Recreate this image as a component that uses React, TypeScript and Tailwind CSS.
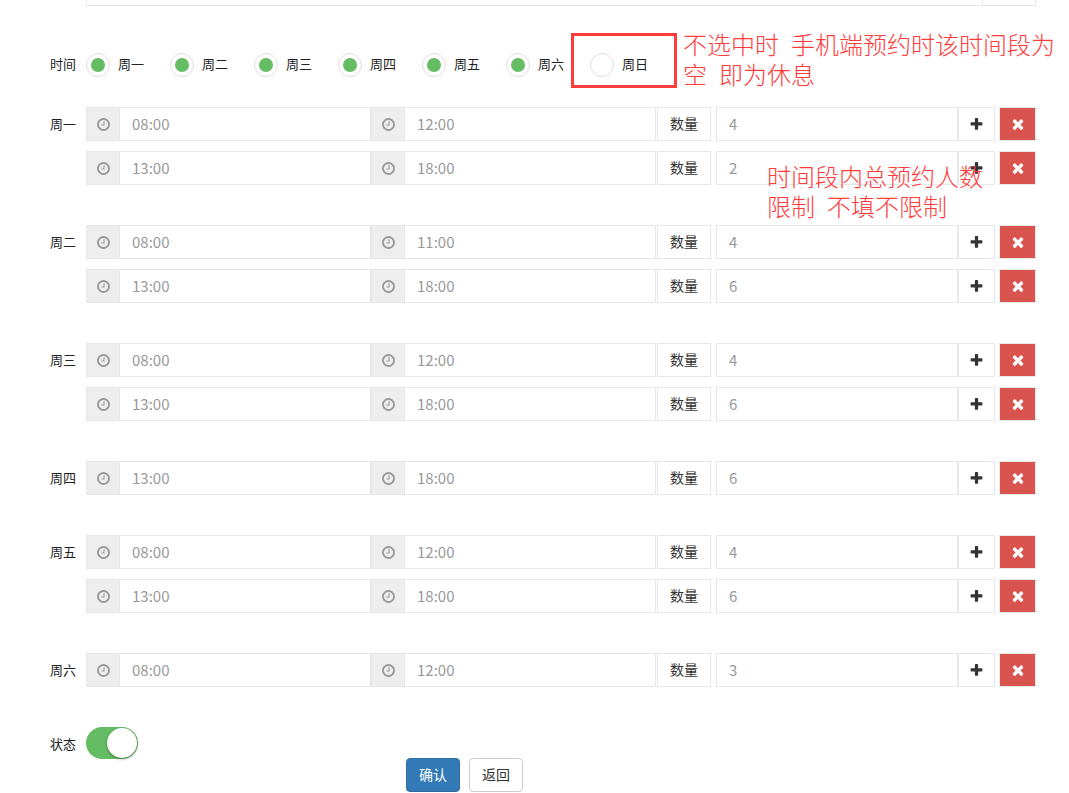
import { useState } from "react";

type Slot = { start: string; end: string; quota: string; note?: string[] };
type Day = { name: string; slots: Slot[] };

const weekdays = ["周一", "周二", "周三", "周四", "周五", "周六", "周日"];

const schedule: Day[] = [
  {
    name: "周一",
    slots: [
      { start: "08:00", end: "12:00", quota: "4" },
      { start: "13:00", end: "18:00", quota: "2", note: ["时间段内总预约人数", "限制  不填不限制"] },
    ],
  },
  {
    name: "周二",
    slots: [
      { start: "08:00", end: "11:00", quota: "4" },
      { start: "13:00", end: "18:00", quota: "6" },
    ],
  },
  {
    name: "周三",
    slots: [
      { start: "08:00", end: "12:00", quota: "4" },
      { start: "13:00", end: "18:00", quota: "6" },
    ],
  },
  { name: "周四", slots: [{ start: "13:00", end: "18:00", quota: "6" }] },
  {
    name: "周五",
    slots: [
      { start: "08:00", end: "12:00", quota: "4" },
      { start: "13:00", end: "18:00", quota: "6" },
    ],
  },
  { name: "周六", slots: [{ start: "08:00", end: "12:00", quota: "3" }] },
];

const CLOCK =
  "M1024 544v448q0 14-9 23t-23 9h-320q-14 0-23-9t-9-23v-64q0-14 9-23t23-9h224v-352q0-14 9-23t23-9h64q14 0 23 9t9 23zm416 352q0-148-73-273t-198-198-273-73-273 73-198 198-73 273 73 273 198 198 273 73 273-73 198-198 73-273zm224 0q0 209-103 385.5t-279.5 279.5-385.5 103-385.5-103-279.5-279.5-103-385.5 103-385.5 279.5-279.5 385.5-103 385.5 103 279.5 279.5 103 385.5z";
const PLUS =
  "M1600 736v192q0 40-28 68t-68 28h-416v416q0 40-28 68t-68 28h-192q-40 0-68-28t-28-68v-416h-416q-40 0-68-28t-28-68v-192q0-40 28-68t68-28h416v-416q0-40 28-68t68-28h192q40 0 68 28t28 68v416h416q40 0 68 28t28 68z";
const TIMES =
  "M1490 1322q0 40-28 68l-136 136q-28 28-68 28t-68-28l-294-294-294 294q-28 28-68 28t-68-28l-136-136q-28-28-28-68t28-68l294-294-294-294q-28-28-28-68t28-68l136-136q28-28 68-28t68 28l294 294 294-294q28-28 68-28t68 28l136 136q28 28 28 68t-28 68l-294 294 294 294q28 28 28 68z";

function Icon({ d, className }: { d: string; className: string }) {
  return (
    <svg viewBox="0 0 1792 1792" className={`shrink-0 ${className}`} fill="currentColor" aria-hidden="true">
      <path d={d} />
    </svg>
  );
}

function Note({ lines, className }: { lines: string[]; className: string }) {
  return (
    <div
      className={`pointer-events-none absolute z-10 whitespace-pre text-2xl/[30px] font-light text-[#ff3b3b] font-['Liberation_Serif','Noto_Sans_CJK_SC',serif] ${className}`}
    >
      {lines.map((line) => (
        <div key={line}>{line}</div>
      ))}
    </div>
  );
}

const fieldClass =
  "min-w-0 flex-1 border border-[#e7e7eb] bg-white px-3 text-[15px] text-[#999] outline-none font-['Noto_Sans_CJK_SC',sans-serif]";

function TimeField({ label, value }: { label: string; value: string }) {
  return (
    <div className="flex min-w-0 flex-1">
      <span className="flex w-[33px] shrink-0 items-center justify-center border border-r-0 border-[#e7e7eb] bg-[#eeeeee] text-[#999]">
        <Icon d={CLOCK} className="size-[15px]" />
      </span>
      <input aria-label={label} defaultValue={value} className={fieldClass} />
    </div>
  );
}

function SlotRow({ day, slot }: { day: string; slot: Slot }) {
  return (
    <div className="relative flex h-[34px]">
      <div className="flex w-3/5">
        <TimeField label={`${day} 开始`} value={slot.start} />
        <TimeField label={`${day} 结束`} value={slot.end} />
      </div>
      <span className="ml-px flex w-[54px] shrink-0 items-center justify-center border border-[#e7e7e7] text-sm text-[#333]">
        数量
      </span>
      <input
        aria-label={`${day} 数量`}
        defaultValue={slot.quota}
        className={`ml-[5px] ${fieldClass}`}
      />
      <button
        type="button"
        aria-label="添加"
        className="flex w-[37px] shrink-0 items-center justify-center border border-[#e7e7e7] text-[#333]"
      >
        <Icon d={PLUS} className="size-[15px]" />
      </button>
      <button
        type="button"
        aria-label="删除"
        className="ml-1 flex w-[37px] shrink-0 items-center justify-center border border-[#e7e7e7] bg-[#d9534f] text-white"
      >
        <Icon d={TIMES} className="size-4" />
      </button>
      {slot.note && <Note lines={slot.note} className="right-[53px] top-3" />}
    </div>
  );
}

export default function App() {
  const [enabled, setEnabled] = useState(true);
  return (
    <form className="bg-white text-[13px] text-[#222] font-['Noto_Sans','Noto_Sans_CJK_SC',sans-serif]">
      <div className="ml-[86px] mr-[33px] flex h-1.5 border-x border-b border-[#e7e7eb]">
        <div className="flex-1" />
        <div className="w-[53px] border-l border-[#e7e7eb]" />
      </div>

      <fieldset className="mt-[47px] flex h-6 items-center gap-2.5">
        <span className="w-[76px] shrink-0 text-right">时间</span>
        <div className="flex gap-[26px]">
          {weekdays.map((name) => (
            <div key={name} className="relative">
              <label className="flex h-6 items-center gap-2 whitespace-nowrap">
                <input
                  type="checkbox"
                  defaultChecked={name !== "周日"}
                  className="size-6 shrink-0 appearance-none rounded-full border border-[#dfdfdf] bg-white bg-clip-content p-1 checked:bg-[#64bd63]"
                />
                {name}
              </label>
              {name === "周日" && (
                <>
                  <div className="pointer-events-none absolute -left-[19px] -top-5 h-[55px] w-[106px] border-3 border-[#ff3b3b]" />
                  <Note lines={["不选中时  手机端预约时该时间段为", "空  即为休息"]} className="-top-[22px] left-[93px]" />
                </>
              )}
            </div>
          ))}
        </div>
      </fieldset>

      <div className="mt-[30px] flex flex-col gap-10 pr-[33px]">
        {schedule.map((day) => (
          <div key={day.name} className="flex gap-2.5">
            <span className="w-[76px] shrink-0 text-right leading-[34px]">{day.name}</span>
            <div className="flex min-w-0 flex-1 flex-col gap-2.5">
              {day.slots.map((slot) => (
                <SlotRow key={slot.start} day={day.name} slot={slot} />
              ))}
            </div>
          </div>
        ))}

        <div className="flex gap-2.5">
          <label htmlFor="status" className="w-[76px] shrink-0 text-right leading-[34px]">
            状态
          </label>
          <button
            id="status"
            type="button"
            role="switch"
            aria-checked={enabled}
            onClick={() => setEnabled(!enabled)}
            className={`flex h-8 w-[52px] items-center rounded-full p-px ${
              enabled ? "justify-end bg-[#64bd63]" : "justify-start bg-[#dfdfdf]"
            }`}
          >
            <span className="size-[30px] rounded-full bg-white shadow-[0_1px_3px_rgba(0,0,0,0.4)]" />
          </button>
        </div>
      </div>

      <div className="-mt-[3px] flex gap-[9px] pl-[406px] text-sm">
        <button type="submit" className="h-[34px] w-[54px] rounded border border-[#2e6da4] bg-[#337ab7] text-white">
          确认
        </button>
        <button type="button" className="h-[34px] w-[54px] rounded border border-[#ccc] bg-white text-[#333]">
          返回
        </button>
      </div>
    </form>
  );
}
